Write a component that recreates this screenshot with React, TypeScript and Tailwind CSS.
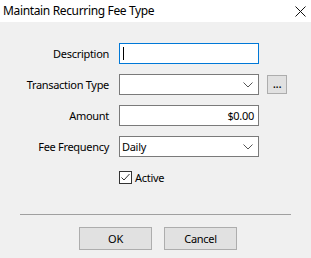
import React from "react";

function Chevron() {
  return (
    <svg width="10" height="6" viewBox="0 0 10 6" className="shrink-0">
      <path d="M0.5 0.5 L5 5 L9.5 0.5" fill="none" stroke="#555" strokeWidth="1" />
    </svg>
  );
}

export default function App() {
  const font = { fontFamily: '"Noto Sans", "Open Sans", sans-serif' };

  return (
    <div className="w-[311px] h-[258px] bg-[#f0f0f0] text-[11px] tracking-[-0.3px] text-black overflow-hidden" style={font}>
      {/* title bar */}
      <div className="h-[22px] bg-white flex items-center justify-between pl-[3px] pr-[5px]">
        <span className="text-[12px] tracking-[-0.35px] leading-none">Maintain Recurring Fee Type</span>
        <svg width="11" height="11" viewBox="0 0 11 11">
          <path d="M0.5 0.5 L10.5 10.5 M10.5 0.5 L0.5 10.5" stroke="#111" strokeWidth="1" />
        </svg>
      </div>

      <div className="pt-[21px]">
        <div className="grid grid-cols-[109px_140px_auto] gap-x-[10px] gap-y-[10px] items-center">
          <label className="text-right leading-none">Description</label>
          <div className="h-[21px] border border-[#0078d7] bg-white flex items-center pl-[3px]">
            <div className="w-px h-[13px] bg-black" />
          </div>
          <div />

          <label className="text-right leading-none">Transaction Type</label>
          <div className="h-[21px] border border-[#7a7a7a] bg-white flex items-center justify-end pr-[5px]">
            <Chevron />
          </div>
          <button className="-ml-[2px] w-[20px] h-[19px] border border-[#adadad] bg-[#e1e1e1] flex items-end justify-center pb-[3px] leading-none text-[12px]">
            ...
          </button>

          <label className="text-right leading-none">Amount</label>
          <div className="h-[21px] border border-[#7a7a7a] bg-white flex items-center justify-end pr-[4px] leading-none">
            $0.00
          </div>
          <div />

          <label className="text-right leading-none">Fee Frequency</label>
          <div className="h-[21px] border border-[#7a7a7a] bg-white flex items-center justify-between pl-[2px] pr-[5px] leading-none">
            <span>Daily</span>
            <Chevron />
          </div>
          <div />
        </div>

        <div className="ml-[119px] mt-[14px] flex items-center gap-[3px] h-[13px]">
          <div className="w-[13px] h-[13px] border border-[#333] bg-white flex items-center justify-center">
            <svg width="11" height="11" viewBox="0 0 11 11">
              <path d="M1.5 5.5 L4 8 L9.5 2" fill="none" stroke="#333" strokeWidth="1" />
            </svg>
          </div>
          <span className="leading-none">Active</span>
        </div>

        <div className="mt-[30px] mx-[20px] h-px bg-[#a0a0a0]" />

        <div className="mt-[12px] pl-[79px] flex gap-[12px]">
          <button className="w-[73px] h-[23px] border border-[#adadad] bg-[#e1e1e1] leading-none">OK</button>
          <button className="w-[73px] h-[23px] border border-[#adadad] bg-[#e1e1e1] leading-none">Cancel</button>
        </div>
      </div>
    </div>
  );
}
